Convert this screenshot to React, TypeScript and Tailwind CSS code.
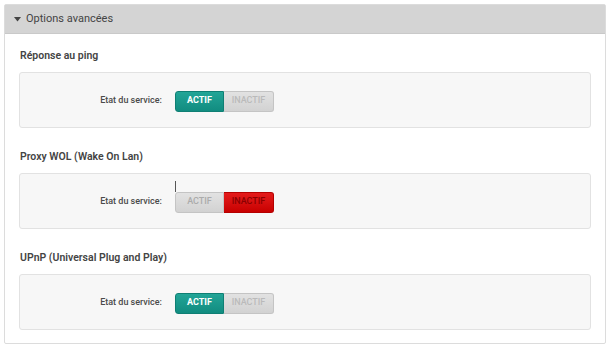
import React from "react";

type Props = { title: string; active: boolean; cursor?: boolean };

function Toggle({ active, cursor }: { active: boolean; cursor?: boolean }) {
  return (
    <div className="relative flex h-[21px] w-[99px] rounded-[3px] text-[9px] font-bold uppercase">
      {cursor && <div className="absolute -top-[11px] left-0 h-[11px] w-px bg-[#555]" />}
      <div
        className={
          active
            ? "flex w-[49px] items-center justify-center rounded-l-[3px] border border-[#0f7f74] bg-gradient-to-b from-[#22a597] to-[#118c80] text-white"
            : "flex w-[49px] items-center justify-center rounded-l-[3px] border border-[#c4c4c4] bg-gradient-to-b from-[#e2e2e2] to-[#d2d2d2] font-medium text-[#ababab]"
        }
      >
        ACTIF
      </div>
      <div
        className={
          active
            ? "flex w-[50px] items-center justify-center rounded-r-[3px] border border-l-0 border-[#c4c4c4] bg-gradient-to-b from-[#e2e2e2] to-[#d2d2d2] font-medium text-[#bababa]"
            : "flex w-[50px] items-center justify-center rounded-r-[3px] border border-l-0 border-[#b50000] bg-gradient-to-b from-[#e41a1a] to-[#c80000] font-medium text-[#8a0000]"
        }
      >
        INACTIF
      </div>
    </div>
  );
}

function Section({ title, active, cursor }: Props) {
  return (
    <div className="flex flex-col">
      <div className="h-[38px] pl-[1px] pt-[17px] text-[10.5px] font-semibold leading-none text-[#444]">{title}</div>
      <div className="flex h-[56px] items-center rounded-[3px] border border-[#e2e2e2] bg-[#f7f7f7] pt-[2px]">
        <div className="w-[155px] pr-[13px] text-right text-[9px] font-medium text-[#4a4a4a]">Etat du service:</div>
        <Toggle active={active} cursor={cursor} />
      </div>
    </div>
  );
}

export default function App() {
  return (
    <div className="h-[348px] w-[611px] bg-white p-[4px] pr-[5px]" style={{ fontFamily: "Roboto, 'Liberation Sans', sans-serif" }}>
      <div className="h-[340px] rounded-[2px] border border-[#dcdcdc] bg-white">
        <div className="flex h-[29px] items-center gap-[5px] border-b border-[#c9c9c9] bg-[#d4d4d4] pl-[9px] text-[11px] text-[#444]">
          <svg width="7" height="5" viewBox="0 0 7 5">
            <path d="M0 0 L7 0 L3.5 4.5 Z" fill="#444" />
          </svg>
          <span>Options avancées</span>
        </div>
        <div className="flex flex-col gap-[7px] px-[14px]">
          <Section title="Réponse au ping" active={true} />
          <Section title="Proxy WOL (Wake On Lan)" active={false} cursor />
          <Section title="UPnP (Universal Plug and Play)" active={true} />
        </div>
      </div>
    </div>
  );
}
